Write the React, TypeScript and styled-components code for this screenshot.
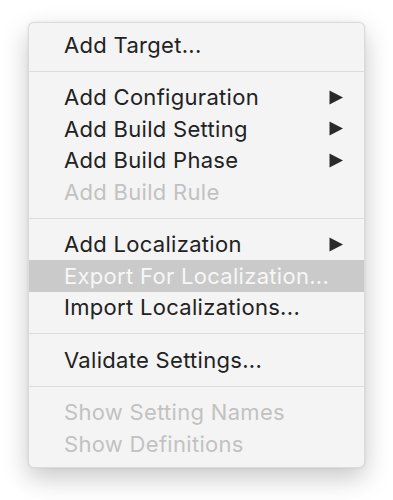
import React from "react";
import styled, { createGlobalStyle } from "styled-components";

const Global = createGlobalStyle`
  html, body { margin: 0; padding: 0; background: #ffffff; }
  body { font-family: Inter, "Liberation Sans", Arial, sans-serif; }
`;

const Page = styled.div`
  width: 393px;
  height: 500px;
  padding: 22px 0 0 28px;
  box-sizing: border-box;
`;

const Menu = styled.div`
  width: 337px;
  box-sizing: border-box;
  background: #f4f4f4;
  border: 1px solid rgba(0, 0, 0, 0.1);
  border-radius: 6px;
  box-shadow: 0 10px 26px rgba(0, 0, 0, 0.22), 0 0 3px rgba(0, 0, 0, 0.08);
  padding: 6px 0 7px;
  display: flex;
  flex-direction: column;
`;

const Item = styled.div<{ $disabled?: boolean; $active?: boolean }>`
  height: 31.5px;
  display: flex;
  align-items: center;
  justify-content: space-between;
  padding: 0 21px 0 35px;
  font-size: 22px;
  letter-spacing: 0.3px;
  color: ${(p) => (p.$active ? "#f7f7f7" : p.$disabled ? "#c2c2c2" : "#222222")};
  background: ${(p) => (p.$active ? "#cacaca" : "transparent")};
  white-space: nowrap;
`;

const Separator = styled.div`
  height: 1px;
  background: #dcdcdc;
  margin: 10px 0;
`;

const Arrow = styled.svg`
  width: 14px;
  height: 15px;
  flex: none;
`;

const SubArrow = () => (
  <Arrow viewBox="0 0 14 15">
    <path d="M0.5 0.5 L14 7.5 L0.5 14.5 Z" fill="#2a2a2a" />
  </Arrow>
);

type Entry =
  | { sep: true }
  | { label: string; sub?: boolean; disabled?: boolean; active?: boolean };

const entries: Entry[] = [
  { label: "Add Target..." },
  { sep: true },
  { label: "Add Configuration", sub: true },
  { label: "Add Build Setting", sub: true },
  { label: "Add Build Phase", sub: true },
  { label: "Add Build Rule", disabled: true },
  { sep: true },
  { label: "Add Localization", sub: true },
  { label: "Export For Localization...", active: true },
  { label: "Import Localizations..." },
  { sep: true },
  { label: "Validate Settings..." },
  { sep: true },
  { label: "Show Setting Names", disabled: true },
  { label: "Show Definitions", disabled: true },
];

export default function App() {
  return (
    <>
      <Global />
      <Page>
        <Menu>
          {entries.map((e, i) =>
            "sep" in e ? (
              <Separator key={i} />
            ) : (
              <Item key={i} $disabled={e.disabled} $active={e.active}>
                <span>{e.label}</span>
                {e.sub && <SubArrow />}
              </Item>
            )
          )}
        </Menu>
      </Page>
    </>
  );
}
